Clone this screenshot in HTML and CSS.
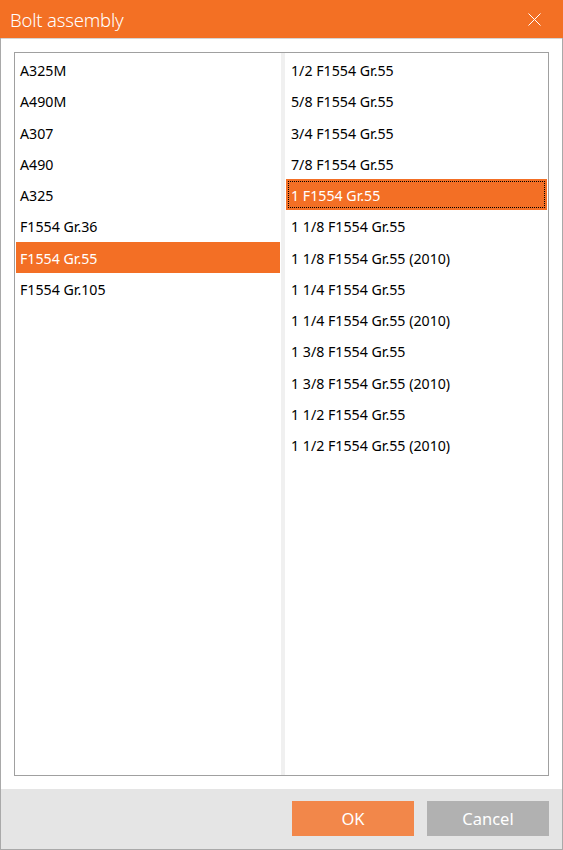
FILE: index.html
```html
<!DOCTYPE html>
<html lang="en">
<head>
    <meta charset="UTF-8">
    <meta name="viewport" content="width=device-width, initial-scale=1.0">
    <title>Bolt assembly</title>
    <link rel="stylesheet" href="styles.css">
</head>
<body>
    <div class="dialog">
        <!-- Barra de título -->
        <div class="titlebar">
            <span class="title">Bolt assembly</span>
            <button class="close-btn" aria-label="Close">
                <svg width="13" height="13" viewBox="0 0 13 13">
                    <path d="M0.5 0.5 L12.5 12.5 M12.5 0.5 L0.5 12.5" stroke="#fff" stroke-width="1" fill="none"/>
                </svg>
            </button>
        </div>

        <!-- Listas de norma y tamaño -->
        <div class="content">
            <div class="lists">
                <ul class="list list-grade">
                    <li>A325M</li>
                    <li>A490M</li>
                    <li>A307</li>
                    <li>A490</li>
                    <li>A325</li>
                    <li>F1554 Gr.36</li>
                    <li class="selected">F1554 Gr.55</li>
                    <li>F1554 Gr.105</li>
                </ul>
                <div class="splitter"></div>
                <ul class="list list-size">
                    <li>1/2 F1554 Gr.55</li>
                    <li>5/8 F1554 Gr.55</li>
                    <li>3/4 F1554 Gr.55</li>
                    <li>7/8 F1554 Gr.55</li>
                    <li class="selected focused">1 F1554 Gr.55</li>
                    <li>1 1/8 F1554 Gr.55</li>
                    <li>1 1/8 F1554 Gr.55 (2010)</li>
                    <li>1 1/4 F1554 Gr.55</li>
                    <li>1 1/4 F1554 Gr.55 (2010)</li>
                    <li>1 3/8 F1554 Gr.55</li>
                    <li>1 3/8 F1554 Gr.55 (2010)</li>
                    <li>1 1/2 F1554 Gr.55</li>
                    <li>1 1/2 F1554 Gr.55 (2010)</li>
                </ul>
            </div>
        </div>

        <!-- Botones -->
        <div class="footer">
            <button class="btn btn-ok">OK</button>
            <button class="btn btn-cancel">Cancel</button>
        </div>
    </div>
</body>
</html>
```

FILE: styles.css
```css
/* Estilos generales */
body {
    margin: 0;
    padding: 0;
    font-family: "Noto Sans", "Open Sans", sans-serif;
    background: #fff;
}

.dialog {
    width: 563px;
    height: 850px;
    box-sizing: border-box;
    display: flex;
    flex-direction: column;
    border: 1px solid #a9a9a9;
    border-top: none;
    background: #fff;
}

/* Barra de título */
.titlebar {
    height: 38px;
    margin: 0 -1px;
    background: #f37024;
    color: #fff;
    display: flex;
    align-items: center;
    justify-content: space-between;
    padding: 0 22px 0 10px;
}

.title {
    font-size: 18.5px;
    font-weight: 300;
    letter-spacing: -0.2px;
}

.close-btn {
    background: none;
    border: none;
    padding: 0;
    width: 13px;
    height: 13px;
    display: flex;
}

/* Listas */
.content {
    flex: 1;
    padding: 13px 13px 13px 13px;
    border-top: 1px solid #d4d4d4;
    display: flex;
}

.lists {
    flex: 1;
    display: flex;
    border: 1px solid #a0a0a0;
}

.list {
    list-style: none;
    margin: 0;
    padding: 1px;
    font-size: 14.2px;
    color: #000;
}

.list-grade {
    width: 264px;
}

.splitter {
    width: 4px;
    background: #f0f0f0;
}

.list-size {
    flex: 1;
}

.list li {
    height: 31.25px;
    line-height: 34px;
    padding-left: 4px;
    white-space: nowrap;
}

.list-size li {
    padding-left: 5px;
}

.list li.selected {
    background: #f36f25;
    color: #fff;
}

.list li.focused {
    position: relative;
}

.list li.focused::after {
    content: "";
    position: absolute;
    inset: 2px;
    border: 1px dotted #000;
}

/* Pie con botones */
.footer {
    height: 60px;
    background: #e5e5e5;
    display: flex;
    justify-content: flex-end;
    align-items: flex-start;
    gap: 13px;
    padding: 12px 13px 0 0;
    box-sizing: border-box;
}

.btn {
    width: 122px;
    height: 35px;
    border: none;
    color: #fff;
    font-family: inherit;
    font-size: 16.5px;
    font-weight: 400;
}

.btn-ok {
    background: #f2874a;
}

.btn-cancel {
    background: #b1b1b1;
}
```
